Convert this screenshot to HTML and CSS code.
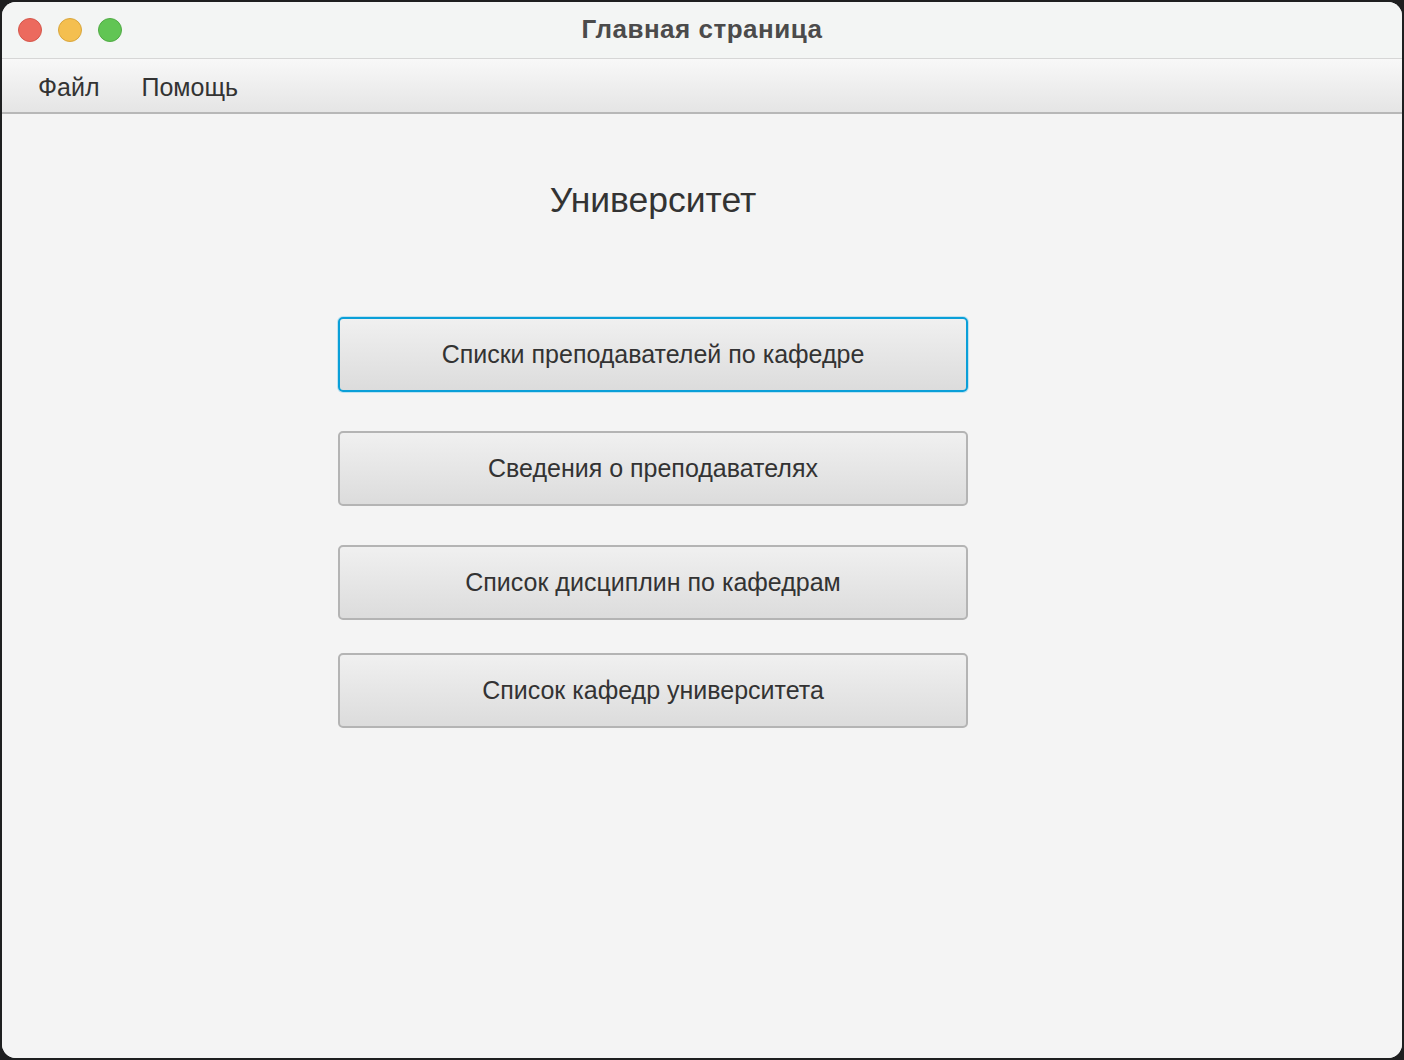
FILE: index.html
```html
<!DOCTYPE html>
<html lang="ru">
<head>
<meta charset="utf-8">
<title>Главная страница</title>
<link rel="stylesheet" href="styles.css">
</head>
<body>
<div class="window">
  <div class="titlebar">
    <div class="lights">
      <span class="light red"></span>
      <span class="light yellow"></span>
      <span class="light green"></span>
    </div>
    <div class="title">Главная страница</div>
  </div>
  <div class="menubar">
    <span class="menu-item">Файл</span>
    <span class="menu-item">Помощь</span>
  </div>
  <div class="content">
    <div class="column">
      <h1 class="heading">Университет</h1>
      <div class="buttons">
        <button class="btn focused">Списки преподавателей по кафедре</button>
        <button class="btn">Сведения о преподавателях</button>
        <button class="btn">Список дисциплин по кафедрам</button>
        <button class="btn last">Список кафедр университета</button>
      </div>
    </div>
  </div>
</div>
</body>
</html>
```
FILE: styles.css
```css
html, body {
  margin: 0;
  padding: 0;
  background: #1e1f20;
  height: 100%;
}
body {
  padding: 2px;
  box-sizing: border-box;
  width: 1404px;
  height: 1060px;
  font-family: "Liberation Sans", Arial, sans-serif;
}
.window {
  width: 1400px;
  height: 1056px;
  border-radius: 14px;
  overflow: hidden;
  background: #f4f4f4;
  display: flex;
  flex-direction: column;
}
.titlebar {
  height: 56px;
  background: #f3f5f4;
  border-bottom: 1px solid #d6d6d6;
  position: relative;
  display: flex;
  align-items: center;
  justify-content: center;
  flex: none;
}
.lights {
  position: absolute;
  left: 16px;
  top: 16px;
  display: flex;
  gap: 16px;
}
.light {
  width: 24px;
  height: 24px;
  border-radius: 50%;
  box-sizing: border-box;
}
.red { background: #ec6a5e; border: 1px solid #d5574b; }
.yellow { background: #f4bf4f; border: 1px solid #d9a63c; }
.green { background: #61c554; border: 1px solid #50ab44; }
.title {
  font-weight: bold;
  font-size: 26px;
  color: #4b4b4b;
  letter-spacing: 0.5px;
  margin-top: -2px;
}
.menubar {
  height: 53px;
  background: linear-gradient(#f8f8f8, #e5e5e5);
  border-bottom: 2px solid #b7b7b7;
  display: flex;
  align-items: center;
  padding-left: 36px;
  gap: 42px;
  flex: none;
}
.menu-item {
  font-size: 25px;
  color: #333;
  margin-top: 3px;
}
.content {
  flex: 1;
  background: #f4f4f4;
}
.column {
  width: 630px;
  margin-left: 336px;
  padding-top: 66px;
}
.heading {
  margin: 0;
  font-weight: normal;
  font-size: 35.5px;
  color: #333;
  text-align: center;
  line-height: 40px;
}
.buttons {
  margin-top: 97px;
  display: flex;
  flex-direction: column;
  gap: 39px;
}
.btn {
  height: 75px;
  width: 630px;
  border: 2px solid #b4b4b4;
  border-radius: 5px;
  background: linear-gradient(#f0f0f0, #dcdcdc);
  font-family: "Liberation Sans", Arial, sans-serif;
  font-size: 25px;
  color: #333;
  padding: 0;
  margin: 0;
}
.btn.focused {
  border-color: #0a9fd8;
  box-shadow: 0 0 0 1px #bfe2f0;
}
.btn.last {
  margin-top: -6px;
}
```
